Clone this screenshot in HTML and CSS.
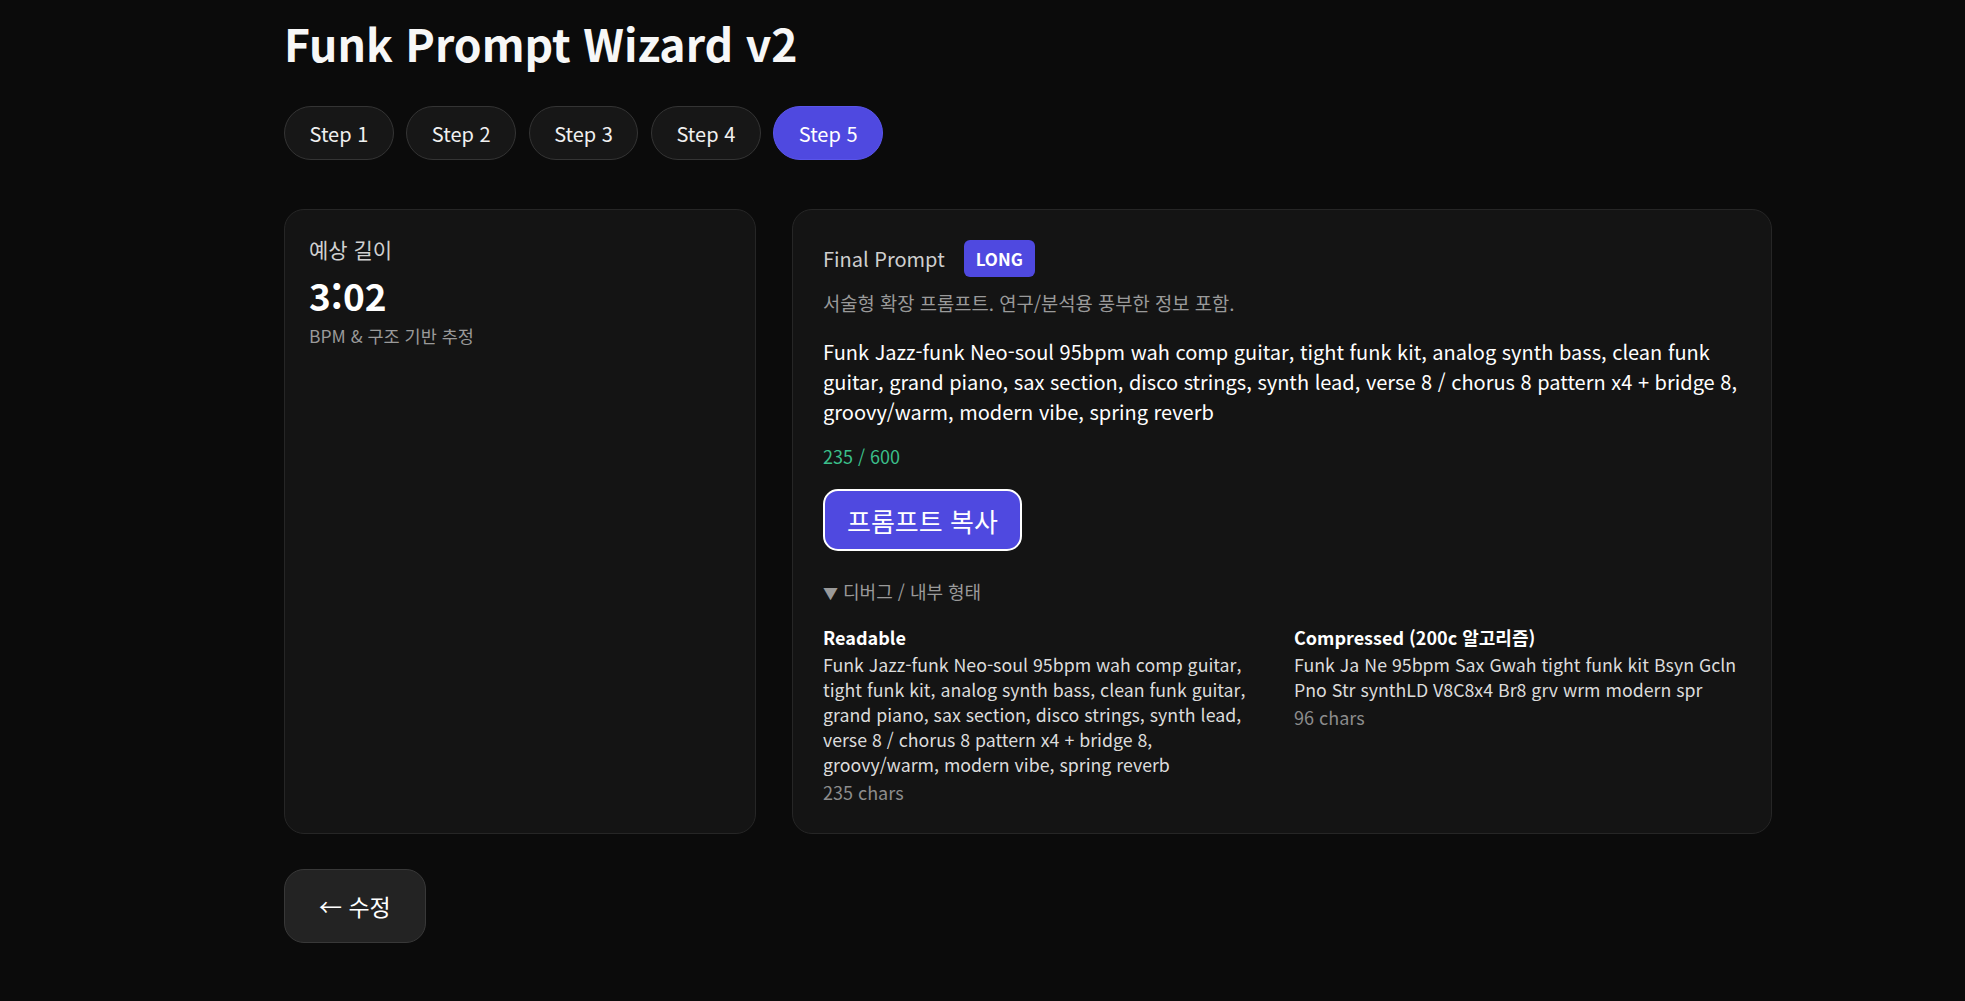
FILE: index.html
```html
<!DOCTYPE html>
<html lang="ko">
<head>
<meta charset="utf-8">
<title>Funk Prompt Wizard v2</title>
<link rel="stylesheet" href="styles.css">
</head>
<body>
<div class="app">
  <h1 class="title">Funk Prompt Wizard v2</h1>
  <nav class="steps">
    <button class="step">Step 1</button>
    <button class="step">Step 2</button>
    <button class="step">Step 3</button>
    <button class="step">Step 4</button>
    <button class="step active">Step 5</button>
  </nav>
  <div class="grid">
    <section class="card side">
      <div class="label">예상 길이</div>
      <div class="duration">3:02</div>
      <div class="hint">BPM &amp; 구조 기반 추정</div>
    </section>
    <section class="card main">
      <div class="head">
        <span class="head-title">Final Prompt</span>
        <span class="badge">LONG</span>
      </div>
      <p class="desc">서술형 확장 프롬프트. 연구/분석용 풍부한 정보 포함.</p>
      <p class="prompt">Funk Jazz-funk Neo-soul 95bpm wah comp guitar, tight funk kit, analog synth bass, clean funk guitar, grand piano, sax section, disco strings, synth lead, verse 8 / chorus 8 pattern x4 + bridge 8, groovy/warm, modern vibe, spring reverb</p>
      <div class="count">235 / 600</div>
      <button class="copy">프롬프트 복사</button>
      <div class="debug"><span class="caret">▼</span> 디버그 / 내부 형태</div>
      <div class="cols">
        <div class="col">
          <div class="col-title">Readable</div>
          <div class="col-text">Funk Jazz-funk Neo-soul 95bpm wah comp guitar, tight funk kit, analog synth bass, clean funk guitar, grand piano, sax section, disco strings, synth lead, verse 8 / chorus 8 pattern x4 + bridge 8, groovy/warm, modern vibe, spring reverb</div>
          <div class="col-meta">235 chars</div>
        </div>
        <div class="col">
          <div class="col-title">Compressed (200c 알고리즘)</div>
          <div class="col-text">Funk Ja Ne 95bpm Sax Gwah tight funk kit Bsyn Gcln Pno Str synthLD V8C8x4 Br8 grv wrm modern spr</div>
          <div class="col-meta">96 chars</div>
        </div>
      </div>
    </section>
  </div>
  <button class="back">← 수정</button>
</div>
</body>
</html>
```

FILE: styles.css
```css
* { box-sizing: border-box; }
html, body {
  margin: 0;
  background: #0b0b0b;
  color: #f2f2f2;
  font-family: "Noto Sans CJK KR", "Noto Sans", sans-serif;
}
.app {
  width: 1488px;
  margin-left: 284px;
  padding-top: 15px;
  padding-bottom: 40px;
}
.title {
  margin: 0;
  font-size: 44.5px;
  line-height: 56px;
  font-weight: 700;
  color: #f7f7f7;
}
.steps {
  display: flex;
  gap: 12.5px;
  margin-top: 35px;
}
.step {
  height: 54px;
  padding: 0 24.5px;
  border-radius: 999px;
  border: 1px solid #343434;
  background: #171717;
  color: #f0f0f0;
  font-family: inherit;
  font-size: 20px;
}
.step.active {
  background: #4f49e0;
  border-color: #5a55ea;
  color: #ffffff;
}
.grid {
  display: grid;
  grid-template-columns: 472px 1fr;
  gap: 36px;
  margin-top: 49px;
}
.card {
  background: #141414;
  border: 1px solid #262626;
  border-radius: 20px;
}
.side { padding: 24px; }
.label {
  font-size: 21px;
  line-height: 30px;
  color: #d0d0d0;
}
.duration {
  margin-top: 8px;
  font-size: 37px;
  line-height: 46px;
  font-weight: 700;
  color: #ffffff;
}
.hint {
  margin-top: 5px;
  font-size: 17.5px;
  line-height: 26px;
  color: #9a9a9a;
}
.main { padding: 30px 30px 29px; }
.head {
  display: flex;
  align-items: center;
  gap: 19px;
}
.head-title {
  font-size: 20px;
  color: #cfcfcf;
}
.badge {
  display: inline-flex;
  align-items: center;
  height: 37px;
  padding: 0 12px;
  border-radius: 6px;
  background: #4f49e0;
  color: #ffffff;
  font-size: 17px;
  font-weight: 700;
}
.desc {
  margin: 13px 0 0;
  font-size: 18.75px;
  line-height: 26px;
  color: #9a9a9a;
}
.prompt {
  margin: 21px 0 0;
  font-size: 20px;
  line-height: 30px;
  color: #ffffff;
}
.count {
  margin-top: 17px;
  font-size: 18px;
  line-height: 24px;
  color: #3bbf8a;
}
.copy {
  margin-top: 21px;
  height: 62px;
  padding: 0 22px;
  border: 2.5px solid #ffffff;
  border-radius: 15px;
  background: #4f49e0;
  color: #ffffff;
  font-family: inherit;
  font-size: 26px;
}
.debug {
  margin-top: 27px;
  font-size: 18px;
  line-height: 26px;
  color: #9a9a9a;
}
.caret {
  font-size: 15px;
}
.cols {
  display: grid;
  grid-template-columns: 1fr 1fr;
  gap: 24px;
  margin-top: 19px;
}
.col-title {
  font-size: 18px;
  line-height: 24px;
  font-weight: 700;
  color: #ffffff;
}
.col-text {
  margin-top: 3px;
  font-size: 17.75px;
  line-height: 25px;
  color: #dcdcdc;
}
.col-meta {
  margin-top: 3px;
  font-size: 18px;
  line-height: 24px;
  color: #8c8c8c;
}
.back {
  margin-top: 35px;
  height: 74px;
  padding: 0 34px;
  border: 1px solid #383838;
  border-radius: 20px;
  background: #232323;
  color: #ffffff;
  font-family: inherit;
  font-size: 23px;
}
```
